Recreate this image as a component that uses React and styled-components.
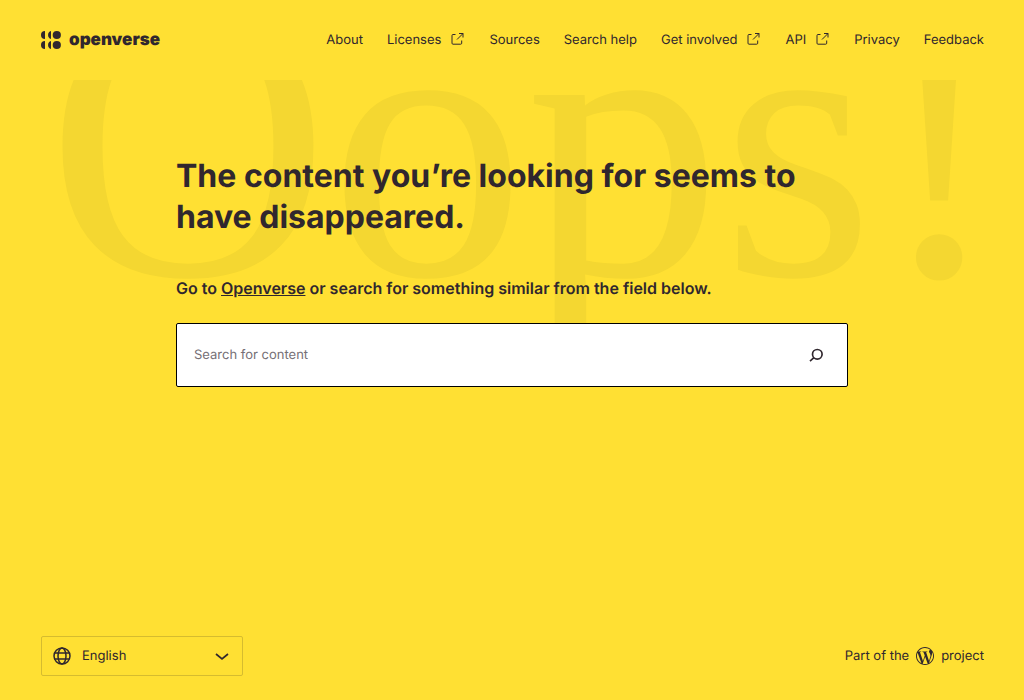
import React from "react";
import styled, { createGlobalStyle } from "styled-components";

const GlobalStyle = createGlobalStyle`
  *, *::before, *::after { box-sizing: border-box; }
  body {
    margin: 0;
    background: #ffe033;
    color: #30272e;
    font-family: Inter, "Liberation Sans", sans-serif;
    font-size: 13px;
    line-height: 20px;
    text-rendering: geometricPrecision;
  }
`;

const Page = styled.div`
  display: flex;
  flex-direction: column;
  min-height: 100vh;
`;

const Header = styled.header`
  display: flex;
  align-items: center;
  justify-content: space-between;
  height: 80px;
  padding: 0 40px;
`;

const Brand = styled.a`
  display: flex;
  align-items: center;
  gap: 8px;
  color: inherit;
  font-size: 17px;
  font-weight: 900;
  line-height: 20px;
  text-decoration: none;
`;

const NavList = styled.ul`
  display: flex;
  gap: 24px;
  margin: 0;
  padding: 0;
  list-style: none;
`;

const NavLink = styled.a`
  display: flex;
  align-items: center;
  gap: 8px;
  color: inherit;
  text-decoration: none;
`;

const Main = styled.main`
  position: relative;
  flex: 1;
  padding: 75px 40px 40px;
  overflow: hidden;
`;

const Backdrop = styled.div`
  position: absolute;
  top: -157px;
  left: 0;
  right: 0;
  padding-left: 27px;
  color: #f4d731;
  font-family: "Liberation Serif", serif;
  font-size: 392px;
  line-height: 440px;
  text-align: center;
  white-space: nowrap;
  pointer-events: none;
  user-select: none;
`;

const Content = styled.div`
  position: relative;
  max-width: 672px;
  margin: 0 auto;
`;

const Title = styled.h1`
  margin: 0 0 39px;
  font-size: 32px;
  font-weight: 700;
  line-height: 41px;
`;

const Lead = styled.p`
  margin: 0 0 23px;
  font-size: 16px;
  font-weight: 600;
  line-height: 24px;
`;

const TextLink = styled.a`
  color: inherit;
  text-decoration: underline;
`;

const SearchForm = styled.form`
  display: flex;
  height: 64px;
  overflow: hidden;
  border: 1px solid #000;
  border-radius: 2px;
  background: #fff;
`;

const SearchInput = styled.input`
  flex: 1;
  min-width: 0;
  padding: 0 17px;
  border: 0;
  outline: 0;
  background: transparent;
  color: #30272e;
  font: inherit;
  text-rendering: inherit;
  &::placeholder { color: #767076; opacity: 1; }
`;

const SearchButton = styled.button`
  display: flex;
  align-items: center;
  justify-content: center;
  width: 62px;
  padding: 0;
  border: 0;
  background: transparent;
  color: inherit;
`;

const Footer = styled.footer`
  display: flex;
  align-items: center;
  justify-content: space-between;
  padding: 0 40px 24px;
`;

const LanguageField = styled.label`
  display: grid;
  grid-template-columns: 1fr;
  align-items: center;
  width: 202px;
  height: 40px;
  margin-left: 1px;
  border: 1px solid #d6bc2f;
  border-radius: 2px;
  svg {
    grid-area: 1 / 1;
    pointer-events: none;
  }
`;

const GlobeMark = styled.svg`
  justify-self: start;
  margin-left: 11px;
`;

const ChevronMark = styled.svg`
  justify-self: end;
  margin-right: 12px;
`;

const LanguageSelect = styled.select`
  grid-area: 1 / 1;
  width: 100%;
  height: 38px;
  padding: 0 40px;
  border: 0;
  outline: 0;
  appearance: none;
  background: transparent;
  color: inherit;
  font: inherit;
  text-rendering: inherit;
`;

const ProjectLink = styled.a`
  display: flex;
  align-items: center;
  gap: 7px;
  color: inherit;
  text-decoration: none;
`;

const LogoMark = () => (
  <svg width="21" height="20" viewBox="0 0 21 20" fill="currentColor" aria-hidden="true">
    <path d="M5 1a4 4 0 0 0 0 8z" />
    <path d="M11 1a4.2 4.2 0 0 0 0 8z" />
    <circle cx="16.8" cy="5" r="4.1" />
    <path d="M5 11a4 4 0 0 0 0 8z" />
    <path d="M11 11a4.2 4.2 0 0 0 0 8z" />
    <circle cx="16.8" cy="15" r="4.1" />
  </svg>
);

const ExternalIcon = () => (
  <svg width="16" height="16" viewBox="0 0 16 16" fill="none" stroke="currentColor" aria-hidden="true">
    <path d="M6.5 2.5H4a1 1 0 0 0-1 1v7.7a1 1 0 0 0 1 1h7.7a1 1 0 0 0 1-1V8.500M10 1.500h4v4M14 1.500l-6 6" />
  </svg>
);

const SearchIcon = () => (
  <svg width="16" height="16" viewBox="0 0 16 16" fill="none" stroke="currentColor" strokeWidth="1.7" aria-hidden="true">
    <circle cx="9.3" cy="7.3" r="4.8" />
    <path d="M5.9 10.7L2 14.2" />
  </svg>
);

const WordPressIcon = () => (
  <svg width="18" height="18" viewBox="0 0 24 24" fill="currentColor" fillRule="evenodd" role="img" aria-label="WordPress">
    <path d="M21.469 6.825c.84 1.537 1.318 3.3 1.318 5.175 0 3.979-2.156 7.456-5.363 9.325l3.295-9.527c.615-1.54.82-2.771.82-3.864 0-.405-.026-.78-.07-1.11m-7.981.105c.647-.03 1.232-.105 1.232-.105.582-.075.514-.93-.067-.899 0 0-1.755.135-2.88.135-1.064 0-2.85-.15-2.85-.15-.585-.03-.661.855-.075.885 0 0 .54.061 1.125.09l1.68 4.605-2.37 7.08L5.354 6.9c.649-.03 1.234-.1 1.234-.1.585-.075.516-.93-.065-.896 0 0-1.746.138-2.874.138-.2 0-.438-.008-.69-.015C4.911 3.15 8.235 1.215 12 1.215c2.809 0 5.365 1.072 7.286 2.833-.046-.003-.091-.009-.141-.009-1.06 0-1.812.923-1.812 1.914 0 .89.513 1.643 1.06 2.531.411.72.89 1.643.89 2.977 0 .915-.354 1.994-.821 3.479l-1.075 3.585-3.9-11.61.001.014zM12 22.784c-1.059 0-2.081-.153-3.048-.437l3.237-9.406 3.315 9.087c.024.053.05.101.078.149-1.12.393-2.325.609-3.582.609M1.211 12c0-1.564.336-3.05.935-4.39L7.29 21.709C3.694 19.96 1.212 16.271 1.211 12M12 0C5.385 0 0 5.385 0 12s5.385 12 12 12 12-5.385 12-12S18.615 0 12 0" />
  </svg>
);

const links = [
  { label: "About" },
  { label: "Licenses", external: true },
  { label: "Sources" },
  { label: "Search help" },
  { label: "Get involved", external: true },
  { label: "API", external: true },
  { label: "Privacy" },
  { label: "Feedback" },
];

export default function App() {
  return (
    <Page>
      <GlobalStyle />
      <Header>
        <Brand href="#">
          <LogoMark />
          openverse
        </Brand>
        <nav aria-label="Main">
          <NavList>
            {links.map(({ label, external }) => (
              <li key={label}>
                <NavLink href="#">
                  {label}
                  {external && <ExternalIcon />}
                </NavLink>
              </li>
            ))}
          </NavList>
        </nav>
      </Header>
      <Main>
        <Backdrop aria-hidden="true">Oops!</Backdrop>
        <Content>
          <Title>The content you’re looking for seems to have disappeared.</Title>
          <Lead>
            Go to <TextLink href="#">Openverse</TextLink> or search for something similar from the field below.
          </Lead>
          <SearchForm role="search" onSubmit={(e) => e.preventDefault()}>
            <SearchInput type="search" aria-label="Search for content" placeholder="Search for content" />
            <SearchButton type="submit" aria-label="Search">
              <SearchIcon />
            </SearchButton>
          </SearchForm>
        </Content>
      </Main>
      <Footer>
        <LanguageField>
          <LanguageSelect aria-label="Language" defaultValue="en">
            <option value="en">English</option>
          </LanguageSelect>
          <GlobeMark width="18" height="18" viewBox="0 0 18 18" fill="none" stroke="currentColor" strokeWidth="1.5" aria-hidden="true">
            <circle cx="9" cy="9" r="8" />
            <ellipse cx="9" cy="9" rx="4" ry="8" />
            <path d="M1.6 6h14.8M1.6 12h14.8" />
          </GlobeMark>
          <ChevronMark width="16" height="16" viewBox="0 0 16 16" fill="none" stroke="currentColor" strokeWidth="1.7" aria-hidden="true">
            <path d="M2 6l6 5 6-5" />
          </ChevronMark>
        </LanguageField>
        <ProjectLink href="#">
          Part of the
          <WordPressIcon />
          project
        </ProjectLink>
      </Footer>
    </Page>
  );
}
